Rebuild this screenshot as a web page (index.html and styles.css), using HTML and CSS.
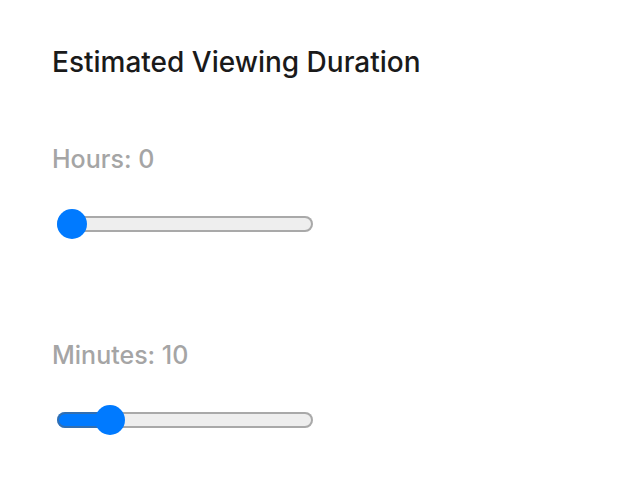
FILE: index.html
```html
<!DOCTYPE html>
<html lang="en">
<head>
    <meta charset="UTF-8">
    <meta name="viewport" content="width=device-width, initial-scale=1.0">
    <title>Estimated Viewing Duration</title>
    <link rel="stylesheet" href="styles.css">
</head>
<body>
    <div class="panel">
        <h2 class="title">Estimated Viewing Duration</h2>

        <div class="field">
            <label for="hours" class="field-label">Hours: 0</label>
            <input type="range" id="hours" class="slider" min="0" max="24" value="0" style="--fill: 0%">
        </div>

        <div class="field">
            <label for="minutes" class="field-label">Minutes: 10</label>
            <input type="range" id="minutes" class="slider" min="0" max="60" value="10" style="--fill: 21%">
        </div>
    </div>
</body>
</html>
```

FILE: styles.css
```css
body {
    font-family: Inter, "Noto Sans", sans-serif;
    background-color: #fff;
    color: #1a1a1a;
    margin: 0;
}

.panel {
    display: flex;
    flex-direction: column;
    gap: 101px;
    padding: 46px 52px 0;
}

.title {
    font-size: 28px;
    font-weight: 500;
    line-height: 1.2;
    margin: 0 0 -37px;
}

.field {
    display: flex;
    flex-direction: column;
    align-items: flex-start;
}

.field-label {
    font-size: 25px;
    font-weight: 500;
    line-height: 1.2;
    color: #a5a5a5;
    margin-bottom: 35px;
}

.slider {
    -webkit-appearance: none;
    appearance: none;
    width: 256px;
    height: 30px;
    margin: 0 0 0 5px;
    background: transparent;
}

.slider::-webkit-slider-runnable-track {
    height: 16px;
    border-radius: 8px;
    background: linear-gradient(to right, #007aff var(--fill), #eeeeee var(--fill));
    box-shadow: inset 0 0 0 2px rgba(100, 100, 100, 0.5);
}

.slider::-webkit-slider-thumb {
    -webkit-appearance: none;
    width: 30px;
    height: 30px;
    margin-top: -7px;
    border: none;
    border-radius: 50%;
    background: #007aff;
}
```
